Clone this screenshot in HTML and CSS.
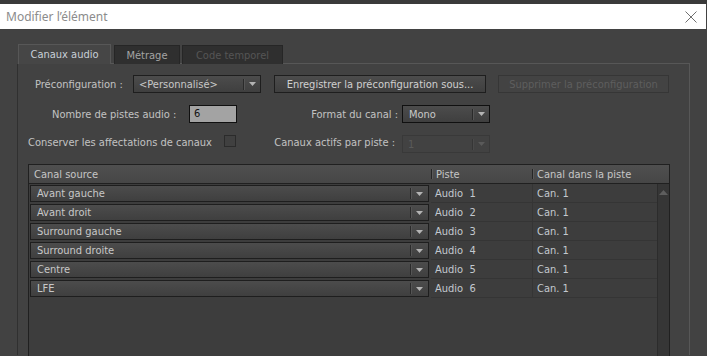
FILE: index.html
```html
<!DOCTYPE html>
<html lang="fr">
<head>
<meta charset="utf-8">
<title>Modifier l’élément</title>
<link rel="stylesheet" href="styles.css">
</head>
<body>
<div class="topstrip"></div>
<div class="titlebar">
  <span class="title">Modifier l’élément</span>
  <svg class="close" width="12" height="12" viewBox="0 0 12 12"><path d="M0.5 0.5 L11.5 11.5 M11.5 0.5 L0.5 11.5" stroke="#6f6f6f" stroke-width="1" fill="none"/></svg>
</div>
<div class="main">
  <div class="tabs">
    <div class="tab active">Canaux audio</div>
    <div class="tab t2">Métrage</div>
    <div class="tab t3 disabled">Code temporel</div>
  </div>
  <div class="panel">
    <div class="row r1">
      <span class="lbl w98">Préconfiguration :</span>
      <div class="sel w128"><span class="val">&lt;Personnalisé&gt;</span><span class="sep"></span><span class="arrow"><svg width="7" height="4" viewBox="0 0 7 4"><path d="M0 0H7L3.5 4Z" fill="#b4b4b4"/></svg></span></div>
      <div class="btn bsave">Enregistrer la préconfiguration sous...</div>
      <div class="btn bdel disabled">Supprimer la préconfiguration</div>
    </div>
    <div class="row r2">
      <span class="lbl w137">Nombre de pistes audio :</span>
      <div class="num">6</div>
      <span class="lbl rlbl w165">Format du canal :</span>
      <div class="sel w88 focus"><span class="val">Mono</span><span class="sep"></span><span class="arrow"><svg width="7" height="4" viewBox="0 0 7 4"><path d="M0 0H7L3.5 4Z" fill="#b4b4b4"/></svg></span></div>
    </div>
    <div class="row r3">
      <span class="lbl w196">Conserver les affectations de canaux</span>
      <span class="check"></span>
      <span class="lbl rlbl w166">Canaux actifs par piste :</span>
      <div class="sel w88 disabled"><span class="val">1</span><span class="sep"></span><span class="arrow"><svg width="7" height="4" viewBox="0 0 7 4"><path d="M0 0H7L3.5 4Z" fill="#5a5a5a"/></svg></span></div>
    </div>

    <div class="table">
      <div class="thead">
        <div class="th first">Canal source</div>
        <div class="th"><span class="hdiv"></span>Piste</div>
        <div class="th"><span class="hdiv"></span>Canal dans la piste</div>
      </div>
      <div class="tbody">
        <div class="rows">
          <div class="tr"><div class="c1"><div class="sel rsel"><span class="val">Avant gauche</span><span class="sep"></span><span class="arrow"><svg width="7" height="4" viewBox="0 0 7 4"><path d="M0 0H7L3.5 4Z" fill="#b4b4b4"/></svg></span></div></div><div class="c2">Audio&nbsp; 1</div><div class="c3">Can. 1</div></div>
          <div class="tr"><div class="c1"><div class="sel rsel"><span class="val">Avant droit</span><span class="sep"></span><span class="arrow"><svg width="7" height="4" viewBox="0 0 7 4"><path d="M0 0H7L3.5 4Z" fill="#b4b4b4"/></svg></span></div></div><div class="c2">Audio&nbsp; 2</div><div class="c3">Can. 1</div></div>
          <div class="tr"><div class="c1"><div class="sel rsel"><span class="val">Surround gauche</span><span class="sep"></span><span class="arrow"><svg width="7" height="4" viewBox="0 0 7 4"><path d="M0 0H7L3.5 4Z" fill="#b4b4b4"/></svg></span></div></div><div class="c2">Audio&nbsp; 3</div><div class="c3">Can. 1</div></div>
          <div class="tr"><div class="c1"><div class="sel rsel"><span class="val">Surround droite</span><span class="sep"></span><span class="arrow"><svg width="7" height="4" viewBox="0 0 7 4"><path d="M0 0H7L3.5 4Z" fill="#b4b4b4"/></svg></span></div></div><div class="c2">Audio&nbsp; 4</div><div class="c3">Can. 1</div></div>
          <div class="tr"><div class="c1"><div class="sel rsel"><span class="val">Centre</span><span class="sep"></span><span class="arrow"><svg width="7" height="4" viewBox="0 0 7 4"><path d="M0 0H7L3.5 4Z" fill="#b4b4b4"/></svg></span></div></div><div class="c2">Audio&nbsp; 5</div><div class="c3">Can. 1</div></div>
          <div class="tr"><div class="c1"><div class="sel rsel"><span class="val">LFE</span><span class="sep"></span><span class="arrow"><svg width="7" height="4" viewBox="0 0 7 4"><path d="M0 0H7L3.5 4Z" fill="#b4b4b4"/></svg></span></div></div><div class="c2">Audio&nbsp; 6</div><div class="c3">Can. 1</div></div>
        </div>
        <div class="scroll"><svg width="9" height="5" viewBox="0 0 9 5"><path d="M0 5H9L4.5 0Z" fill="#5e5e5e"/></svg></div>
      </div>
    </div>
  </div>
</div>
</body>
</html>
```

FILE: styles.css
```css
html, body {
  margin: 0;
  padding: 0;
}
body {
  background: #424242;
  font-family: "DejaVu Sans Condensed", "DejaVu Sans", sans-serif;
  font-stretch: condensed;
  font-size: 11px;
  color: #c4c4c4;
  width: 707px;
  height: 356px;
  overflow: hidden;
}
.topstrip {
  height: 4px;
  background: #3a3a3a;
}
.titlebar {
  height: 25px;
  width: 706px;
  background: #ffffff;
  display: flex;
  align-items: center;
  justify-content: space-between;
  padding: 0 9px 0 6px;
  box-sizing: border-box;
}
.title {
  font-family: "Noto Sans", "Open Sans", sans-serif;
  font-stretch: normal;
  font-size: 12px;
  color: #8c8c8c;
}
.main {
  padding: 16px 0 0 17px;
}
.tabs {
  display: flex;
  align-items: flex-end;
  height: 19px;
  margin-left: 1px;
  margin-bottom: -1px;
  position: relative;
  z-index: 1;
}
.tab {
  height: 19px;
  box-sizing: border-box;
  border: 1px solid #262626;
  border-bottom: none;
  background: #2f2f2f;
  color: #a4a4a4;
  display: flex;
  align-items: center;
  justify-content: center;
  width: 66px;
  margin-left: 3px;
}
.tab.active {
  width: 93px;
  height: 20px;
  margin-left: 0;
  background: #464646;
  border-color: #575757;
  color: #c8d0d8;
  padding-bottom: 1px;
}
.tab.t3 {
  width: 101px;
  margin-left: 2px;
}
.tab.disabled {
  color: #555555;
}
.panel {
  width: 673px;
  height: 292px;
  box-sizing: border-box;
  border: 1px solid #575757;
  border-left-color: #303030;
  border-bottom: none;
  padding-top: 11px;
}
.row {
  display: flex;
  align-items: center;
  height: 18px;
}
.r1 { margin-left: 17px; }
.r2 { margin-left: 34px; margin-top: 12px; }
.r3 { margin-left: 10px; margin-top: 12px; align-items: flex-start; }
.r3 .lbl { line-height: 16px; }
.lbl {
  color: #c2c2c2;
  white-space: nowrap;
  flex: none;
}
.rlbl { text-align: right; }
.w98 { width: 98px; }
.w137 { width: 137px; }
.w165 { width: 161px; padding-right: 4px; }
.w196 { width: 196px; }
.w166 { width: 159px; padding-right: 7px; }
.w128 { width: 128px; }
.w88 { width: 88px; }

.sel {
  display: flex;
  align-items: center;
  height: 18px;
  box-sizing: border-box;
  border: 1px solid #1e1e1e;
  background: linear-gradient(#4c4c4c, #3f3f3f);
  color: #c8c8c8;
  flex: none;
}
.sel .val {
  flex: 1;
  padding-left: 5px;
  white-space: nowrap;
  overflow: hidden;
}
.sel .sep {
  width: 1px;
  height: 11px;
  background: #2a2a2a;
  box-shadow: 1px 0 0 #555555;
}
.sel .arrow {
  width: 16px;
  display: flex;
  justify-content: center;
  align-items: center;
}
.sel.focus { border-color: #101010; }
.sel.focus .val { padding-left: 6px; }
.sel.disabled {
  border-color: #393939;
  background: #424242;
  color: #5a5a5a;
}
.sel.disabled .sep { background: #363636; box-shadow: 1px 0 0 #4a4a4a; }

.btn {
  height: 18px;
  box-sizing: border-box;
  border: 1px solid #1e1e1e;
  background: linear-gradient(#4c4c4c, #3f3f3f);
  color: #d0d0d0;
  display: flex;
  align-items: center;
  justify-content: center;
  white-space: nowrap;
  flex: none;
}
.bsave { width: 212px; margin-left: 13px; }
.bdel { width: 171px; margin-left: 12px; }
.btn.disabled {
  border-color: #363636;
  background: #434343;
  color: #5e5e5e;
}
.num {
  width: 48px;
  height: 18px;
  box-sizing: border-box;
  border: 1px solid #101010;
  background: #a3a3a3;
  color: #111111;
  padding-left: 4px;
  line-height: 16px;
  flex: none;
}
.check {
  width: 12px;
  height: 12px;
  box-sizing: border-box;
  border: 1px solid #2b2b2b;
  background: #404040;
  flex: none;
}

.table {
  margin: 11px 0 0 10px;
  width: 642px;
  box-sizing: border-box;
  border: 1px solid #202020;
  border-bottom: none;
  background: #3d3d3d;
}
.thead {
  display: grid;
  grid-template-columns: 402px 101px 137px;
  height: 19px;
  box-sizing: border-box;
  background: linear-gradient(#4f4f4f, #464646);
  border-bottom: 1px solid #202020;
  color: #c6c6c6;
}
.th {
  display: flex;
  align-items: center;
}
.th.first { padding-left: 5px; }
.hdiv {
  width: 1px;
  height: 10px;
  background: #262626;
  box-shadow: 1px 0 0 #5a5a5a;
  margin-right: 4px;
}
.tbody {
  display: flex;
  height: 180px;
}
.rows {
  width: 628px;
}
.tr {
  display: grid;
  grid-template-columns: 402px 101px 125px;
  height: 19px;
}
.c1 {
  padding: 1px 0 0 1px;
}
.rsel {
  width: 399px;
  height: 17px;
}
.rsel .val { padding-left: 6px; }
.rsel .arrow { width: 17px; }
.c2, .c3 {
  border-bottom: 1px solid #353535;
  display: flex;
  align-items: center;
  color: #c3c9cf;
  white-space: nowrap;
}
.c2 { padding-left: 4px; }
.c3 { padding-left: 4px; border-left: 1px solid #353535; }
.scroll {
  width: 12px;
  box-sizing: border-box;
  background: #363636;
  border-left: 1px solid #2c2c2c;
  display: flex;
  justify-content: center;
  padding-top: 6px;
  align-items: flex-start;
}
```
